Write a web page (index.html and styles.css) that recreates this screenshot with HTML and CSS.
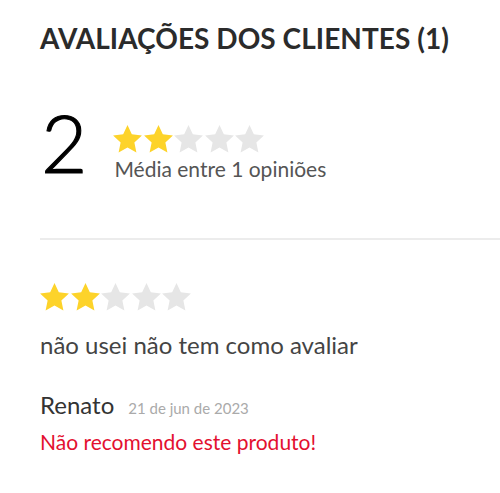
FILE: index.html
```html
<!DOCTYPE html>
<html lang="pt-BR">
<head>
<meta charset="utf-8">
<link rel="stylesheet" href="styles.css">
</head>
<body>
<section class="reviews">
  <h2 class="title">AVALIAÇÕES DOS CLIENTES (1)</h2>
  <div class="summary">
    <div class="score">2</div>
    <div class="summary-info">
      <div class="stars">
        <svg class="star on" viewBox="1.3 1.5 21.4 20.4"><path d="M12 1.5l3.2 6.9 7.5.9-5.6 5.2 1.5 7.4L12 18.2l-6.6 3.7 1.5-7.4-5.6-5.2 7.5-.9z"/></svg>
        <svg class="star on" viewBox="1.3 1.5 21.4 20.4"><path d="M12 1.5l3.2 6.9 7.5.9-5.6 5.2 1.5 7.4L12 18.2l-6.6 3.7 1.5-7.4-5.6-5.2 7.5-.9z"/></svg>
        <svg class="star" viewBox="1.3 1.5 21.4 20.4"><path d="M12 1.5l3.2 6.9 7.5.9-5.6 5.2 1.5 7.4L12 18.2l-6.6 3.7 1.5-7.4-5.6-5.2 7.5-.9z"/></svg>
        <svg class="star" viewBox="1.3 1.5 21.4 20.4"><path d="M12 1.5l3.2 6.9 7.5.9-5.6 5.2 1.5 7.4L12 18.2l-6.6 3.7 1.5-7.4-5.6-5.2 7.5-.9z"/></svg>
        <svg class="star" viewBox="1.3 1.5 21.4 20.4"><path d="M12 1.5l3.2 6.9 7.5.9-5.6 5.2 1.5 7.4L12 18.2l-6.6 3.7 1.5-7.4-5.6-5.2 7.5-.9z"/></svg>
      </div>
      <div class="avg">Média entre 1 opiniões</div>
    </div>
  </div>
  <hr class="divider">
  <article class="review">
    <div class="stars">
      <svg class="star on" viewBox="1.3 1.5 21.4 20.4"><path d="M12 1.5l3.2 6.9 7.5.9-5.6 5.2 1.5 7.4L12 18.2l-6.6 3.7 1.5-7.4-5.6-5.2 7.5-.9z"/></svg>
      <svg class="star on" viewBox="1.3 1.5 21.4 20.4"><path d="M12 1.5l3.2 6.9 7.5.9-5.6 5.2 1.5 7.4L12 18.2l-6.6 3.7 1.5-7.4-5.6-5.2 7.5-.9z"/></svg>
      <svg class="star" viewBox="1.3 1.5 21.4 20.4"><path d="M12 1.5l3.2 6.9 7.5.9-5.6 5.2 1.5 7.4L12 18.2l-6.6 3.7 1.5-7.4-5.6-5.2 7.5-.9z"/></svg>
      <svg class="star" viewBox="1.3 1.5 21.4 20.4"><path d="M12 1.5l3.2 6.9 7.5.9-5.6 5.2 1.5 7.4L12 18.2l-6.6 3.7 1.5-7.4-5.6-5.2 7.5-.9z"/></svg>
      <svg class="star" viewBox="1.3 1.5 21.4 20.4"><path d="M12 1.5l3.2 6.9 7.5.9-5.6 5.2 1.5 7.4L12 18.2l-6.6 3.7 1.5-7.4-5.6-5.2 7.5-.9z"/></svg>
    </div>
    <p class="text">não usei não tem como avaliar</p>
    <div class="author">
      <span class="name">Renato</span>
      <span class="date">21 de jun de 2023</span>
    </div>
    <p class="recommend">Não recomendo este produto!</p>
  </article>
</section>
</body>
</html>
```

FILE: styles.css
```css
html, body {
  margin: 0;
  padding: 0;
  background: #fff;
}
body {
  font-family: Lato, "Open Sans", sans-serif;
  color: #333;
}
.reviews {
  padding: 22px 0 0 40px;
}
.title {
  margin: 0;
  font-size: 28px;
  line-height: 32px;
  font-weight: 700;
  color: #2b2b2b;
  letter-spacing: 0.05px;
}
.summary {
  display: flex;
  align-items: flex-start;
  margin-top: 48px;
  gap: 26px;
}
.score {
  font-size: 80px;
  font-weight: 300;
  line-height: 80px;
  color: #000;
  margin-left: 1px;
  -webkit-text-stroke: 1.1px #000;
}
.summary-info {
  padding-top: 23px;
}
.stars {
  display: flex;
  gap: 1.5px;
}
.star {
  width: 29px;
  height: 27.5px;
  fill: #e6e6e6;
}
.star.on {
  fill: #fdd32a;
}
.avg {
  font-size: 21px;
  line-height: 24px;
  color: #555;
  margin-top: 4.5px;
  margin-left: 1px;
}
.divider {
  border: 0;
  height: 2px;
  background: #ececec;
  margin: 56px 0 0 0;
}
.review {
  padding-top: 43px;
}
.text {
  margin: 20px 0 0;
  font-size: 24px;
  line-height: 28px;
  color: #444;
}
.author {
  margin-top: 32px;
  display: flex;
  align-items: baseline;
  gap: 14px;
  line-height: 28px;
}
.name {
  font-size: 24px;
  color: #333;
}
.date {
  font-size: 15px;
  color: #aaa;
}
.recommend {
  margin: 8px 0 0;
  font-size: 21px;
  line-height: 24px;
  color: #e3102f;
}
```
